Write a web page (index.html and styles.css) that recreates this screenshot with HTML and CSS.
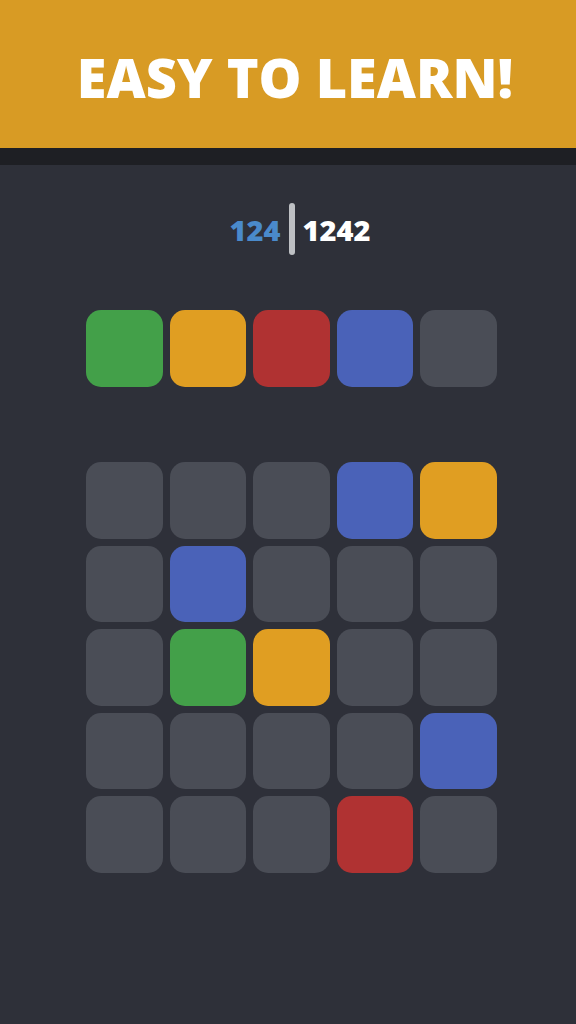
FILE: index.html
```html
<!DOCTYPE html>
<html lang="en">
<head>
    <meta charset="UTF-8">
    <meta name="viewport" content="width=device-width, initial-scale=1.0">
    <title>Easy to learn</title>
    <link rel="stylesheet" href="styles.css">
</head>
<body>
    <!-- banner -->
    <div id="banner">
        <h1>EASY TO LEARN!</h1>
    </div>
    <div id="strip"></div>

    <div id="game">
        <!-- score -->
        <div class="score">
            <span class="score-current">124</span>
            <span class="score-bar"></span>
            <span class="score-best">1242</span>
        </div>

        <!-- colours to pick -->
        <div class="row palette">
            <div class="tile green"></div>
            <div class="tile orange"></div>
            <div class="tile red"></div>
            <div class="tile blue"></div>
            <div class="tile"></div>
        </div>

        <!-- board -->
        <div class="row board">
            <div class="tile"></div>
            <div class="tile"></div>
            <div class="tile"></div>
            <div class="tile blue"></div>
            <div class="tile orange"></div>

            <div class="tile"></div>
            <div class="tile blue"></div>
            <div class="tile"></div>
            <div class="tile"></div>
            <div class="tile"></div>

            <div class="tile"></div>
            <div class="tile green"></div>
            <div class="tile orange"></div>
            <div class="tile"></div>
            <div class="tile"></div>

            <div class="tile"></div>
            <div class="tile"></div>
            <div class="tile"></div>
            <div class="tile"></div>
            <div class="tile blue"></div>

            <div class="tile"></div>
            <div class="tile"></div>
            <div class="tile"></div>
            <div class="tile red"></div>
            <div class="tile"></div>
        </div>
    </div>
</body>
</html>
```

FILE: styles.css
```css
body {
    margin: 0;
    background-color: rgb(46, 48, 57);
    font-family: "Open Sans", Lato, sans-serif;
    min-height: 1024px;
}
#banner {
    background-color: rgb(216, 155, 36);
    height: 148px;
    display: flex;
    align-items: center;
    justify-content: center;
}
#banner h1 {
    margin: 0;
    padding-left: 14px;
    padding-top: 6px;
    color: rgb(255, 255, 255);
    font-size: 54px;
    font-weight: 800;
    letter-spacing: 0px;
}
#strip {
    height: 17px;
    background-color: rgb(30, 31, 36);
}
#game {
    width: 411px;
    margin-left: 86px;
}
.score {
    display: flex;
    justify-content: center;
    align-items: center;
    gap: 8px;
    margin-top: 38px;
    padding-left: 17px;
    height: 52px;
    font-size: 29px;
    font-weight: 800;
}
.score-current {
    color: rgb(74, 138, 203);
}
.score-best {
    color: rgb(255, 255, 255);
}
.score-bar {
    width: 6px;
    height: 52px;
    border-radius: 3px;
    background-color: rgb(190, 192, 196);
}
.row {
    display: grid;
    grid-template-columns: repeat(5, 1fr);
    gap: 7px;
}
.palette {
    margin-top: 55px;
}
.board {
    margin-top: 75px;
}
.tile {
    height: 77px;
    border-radius: 15px;
    background-color: rgb(74, 77, 86);
}
.board .tile {
    height: 76.5px;
}
.green {
    background-color: rgb(67, 160, 73);
}
.orange {
    background-color: rgb(224, 158, 34);
}
.red {
    background-color: rgb(176, 50, 50);
}
.blue {
    background-color: rgb(74, 98, 184);
}
```
